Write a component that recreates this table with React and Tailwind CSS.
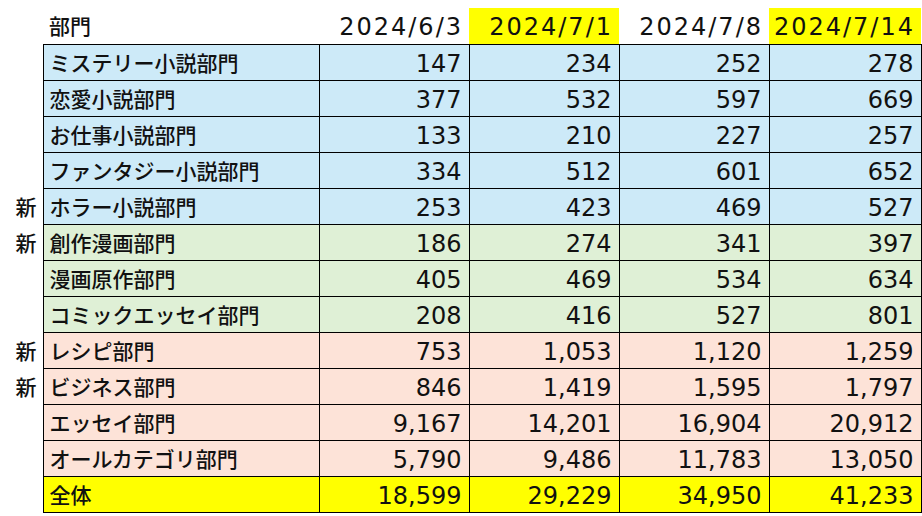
const rows = [
  { name: "ミステリー小説部門", v: ["147", "234", "252", "278"], bg: "bg-[#cdeaf8]" },
  { name: "恋愛小説部門", v: ["377", "532", "597", "669"], bg: "bg-[#cdeaf8]" },
  { name: "お仕事小説部門", v: ["133", "210", "227", "257"], bg: "bg-[#cdeaf8]" },
  { name: "ファンタジー小説部門", v: ["334", "512", "601", "652"], bg: "bg-[#cdeaf8]" },
  { name: "ホラー小説部門", v: ["253", "423", "469", "527"], bg: "bg-[#cdeaf8]", isNew: true },
  { name: "創作漫画部門", v: ["186", "274", "341", "397"], bg: "bg-[#dff0d6]", isNew: true },
  { name: "漫画原作部門", v: ["405", "469", "534", "634"], bg: "bg-[#dff0d6]" },
  { name: "コミックエッセイ部門", v: ["208", "416", "527", "801"], bg: "bg-[#dff0d6]" },
  { name: "レシピ部門", v: ["753", "1,053", "1,120", "1,259"], bg: "bg-[#fde3d8]", isNew: true },
  { name: "ビジネス部門", v: ["846", "1,419", "1,595", "1,797"], bg: "bg-[#fde3d8]", isNew: true },
  { name: "エッセイ部門", v: ["9,167", "14,201", "16,904", "20,912"], bg: "bg-[#fde3d8]" },
  { name: "オールカテゴリ部門", v: ["5,790", "9,486", "11,783", "13,050"], bg: "bg-[#fde3d8]" },
  { name: "全体", v: ["18,599", "29,229", "34,950", "41,233"], bg: "bg-[#ffff00]" },
];

const dates = [
  { d: "2024/6/3", bg: "" },
  { d: "2024/7/1", bg: "bg-[#ffff00]" },
  { d: "2024/7/8", bg: "" },
  { d: "2024/7/14", bg: "bg-[#ffff00]" },
];

const jp = { fontFamily: '"Noto Sans CJK JP", sans-serif' };
const num = { fontFamily: '"DejaVu Sans", sans-serif' };

export default function App() {
  return (
    <div className="w-[922px] h-[516px] bg-white pt-[8px] text-[#111] overflow-hidden">
      <table className="border-collapse table-fixed w-[921px]">
        <colgroup>
          <col className="w-[43px]" />
          <col className="w-[276px]" />
          <col className="w-[150px]" />
          <col className="w-[150px]" />
          <col className="w-[150px]" />
          <col className="w-[152px]" />
        </colgroup>
        <thead>
          <tr className="h-[36px]">
            <th />
            <th className="text-left font-medium pl-[6px] text-[21px] leading-none" style={jp}>
              部門
            </th>
            {dates.map((c) => (
              <th
                key={c.d}
                className={`${c.bg} text-right font-normal pr-[6px] pt-[2px] text-[24px] leading-none tracking-[2px]`}
                style={num}
              >
                {c.d}
              </th>
            ))}
          </tr>
        </thead>
        <tbody>
          {rows.map((r) => (
            <tr key={r.name} className="h-[36px]">
              <td className="text-right pr-[6px] font-medium text-[21px] leading-none" style={jp}>
                {r.isNew ? "新" : ""}
              </td>
              <td
                className={`${r.bg} border border-black pl-[6px] font-medium text-[21px] leading-none`}
                style={jp}
              >
                {r.name}
              </td>
              {r.v.map((x, i) => (
                <td
                  key={i}
                  className={`${r.bg} border border-black text-right pr-[7px] pt-[3px] text-[24px] leading-none`}
                  style={num}
                >
                  {x}
                </td>
              ))}
            </tr>
          ))}
        </tbody>
      </table>
    </div>
  );
}
